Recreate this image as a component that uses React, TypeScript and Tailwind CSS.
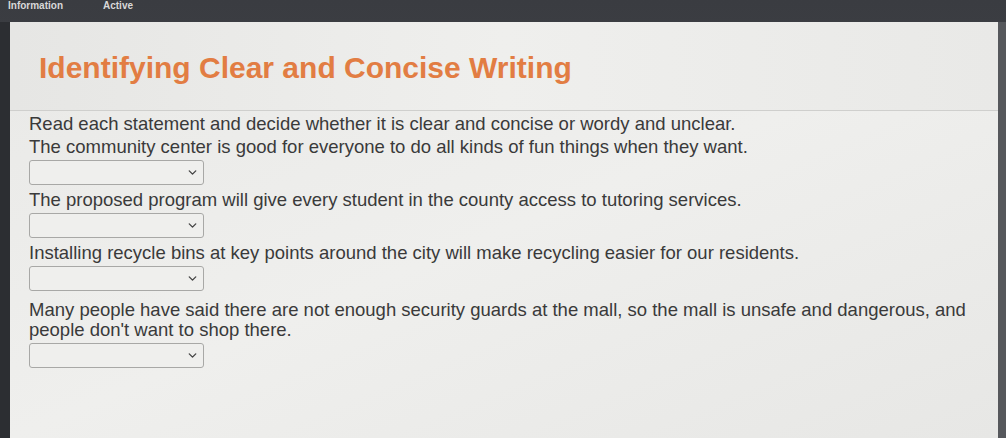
import { ChevronDown } from 'lucide-react'

const items = [
  'The community center is good for everyone to do all kinds of fun things when they want.',
  'The proposed program will give every student in the county access to tutoring services.',
  'Installing recycle bins at key points around the city will make recycling easier for our residents.',
  "Many people have said there are not enough security guards at the mall, so the mall is unsafe and dangerous, and people don't want to shop there.",
]

const Select = () => (
  <div className="mt-[3px] w-[175px] h-[25px] border border-[#a8a8a6] rounded-[3px] bg-[#efefed] flex items-center justify-end pr-[4px]">
    <ChevronDown className="w-[13px] h-[13px] text-[#444]" strokeWidth={2.5} />
  </div>
)

export default function App() {
  return (
    <div className="w-[1006px] h-[438px] overflow-hidden bg-gradient-to-b from-[#3a3c41] to-[#4a4c51] flex flex-col" style={{ fontFamily: '"Liberation Sans", Arial, sans-serif' }}>
      <div className="h-[22px] shrink-0 flex items-start overflow-hidden">
        <div className="pl-[8px] flex gap-[40px] text-[10px] leading-[11px] font-bold text-[#d8d8d8]">
          <span>Information</span>
          <span>Active</span>
        </div>
      </div>
      <div className="flex flex-1 min-h-0">
        <div className="w-[10px] shrink-0 bg-[#2c2e32]" />
        <div className="flex-1 flex flex-col bg-gradient-to-br from-[#e9e9e7] via-[#efefed] to-[#e7e7e5]">
          <div className="pl-[29px] pt-[29px] pb-[25px] border-b border-[#cfcfcd] bg-gradient-to-r from-[#e6e6e4] via-[#efefed] to-[#e9e9e7]">
            <h1 className="text-[30px] leading-[34px] font-bold text-[#e27d43]">Identifying Clear and Concise Writing</h1>
          </div>
          <div className="pl-[19px] pr-[4px] pt-[2px] text-[18.5px] leading-[20px] text-[#3a3a3a]">
            <p className="mt-[1px]">Read each statement and decide whether it is clear and concise or wordy and unclear.</p>
            <p className="mt-[3px]">{items[0]}</p>
            <Select />
            <p className="mt-[5px]">{items[1]}</p>
            <Select />
            <p className="mt-[5px]">{items[2]}</p>
            <Select />
            <p className="mt-[9px]">{items[3]}</p>
            <Select />
          </div>
        </div>
        <div className="w-[8px] shrink-0 bg-[#56585c]" />
      </div>
    </div>
  )
}
